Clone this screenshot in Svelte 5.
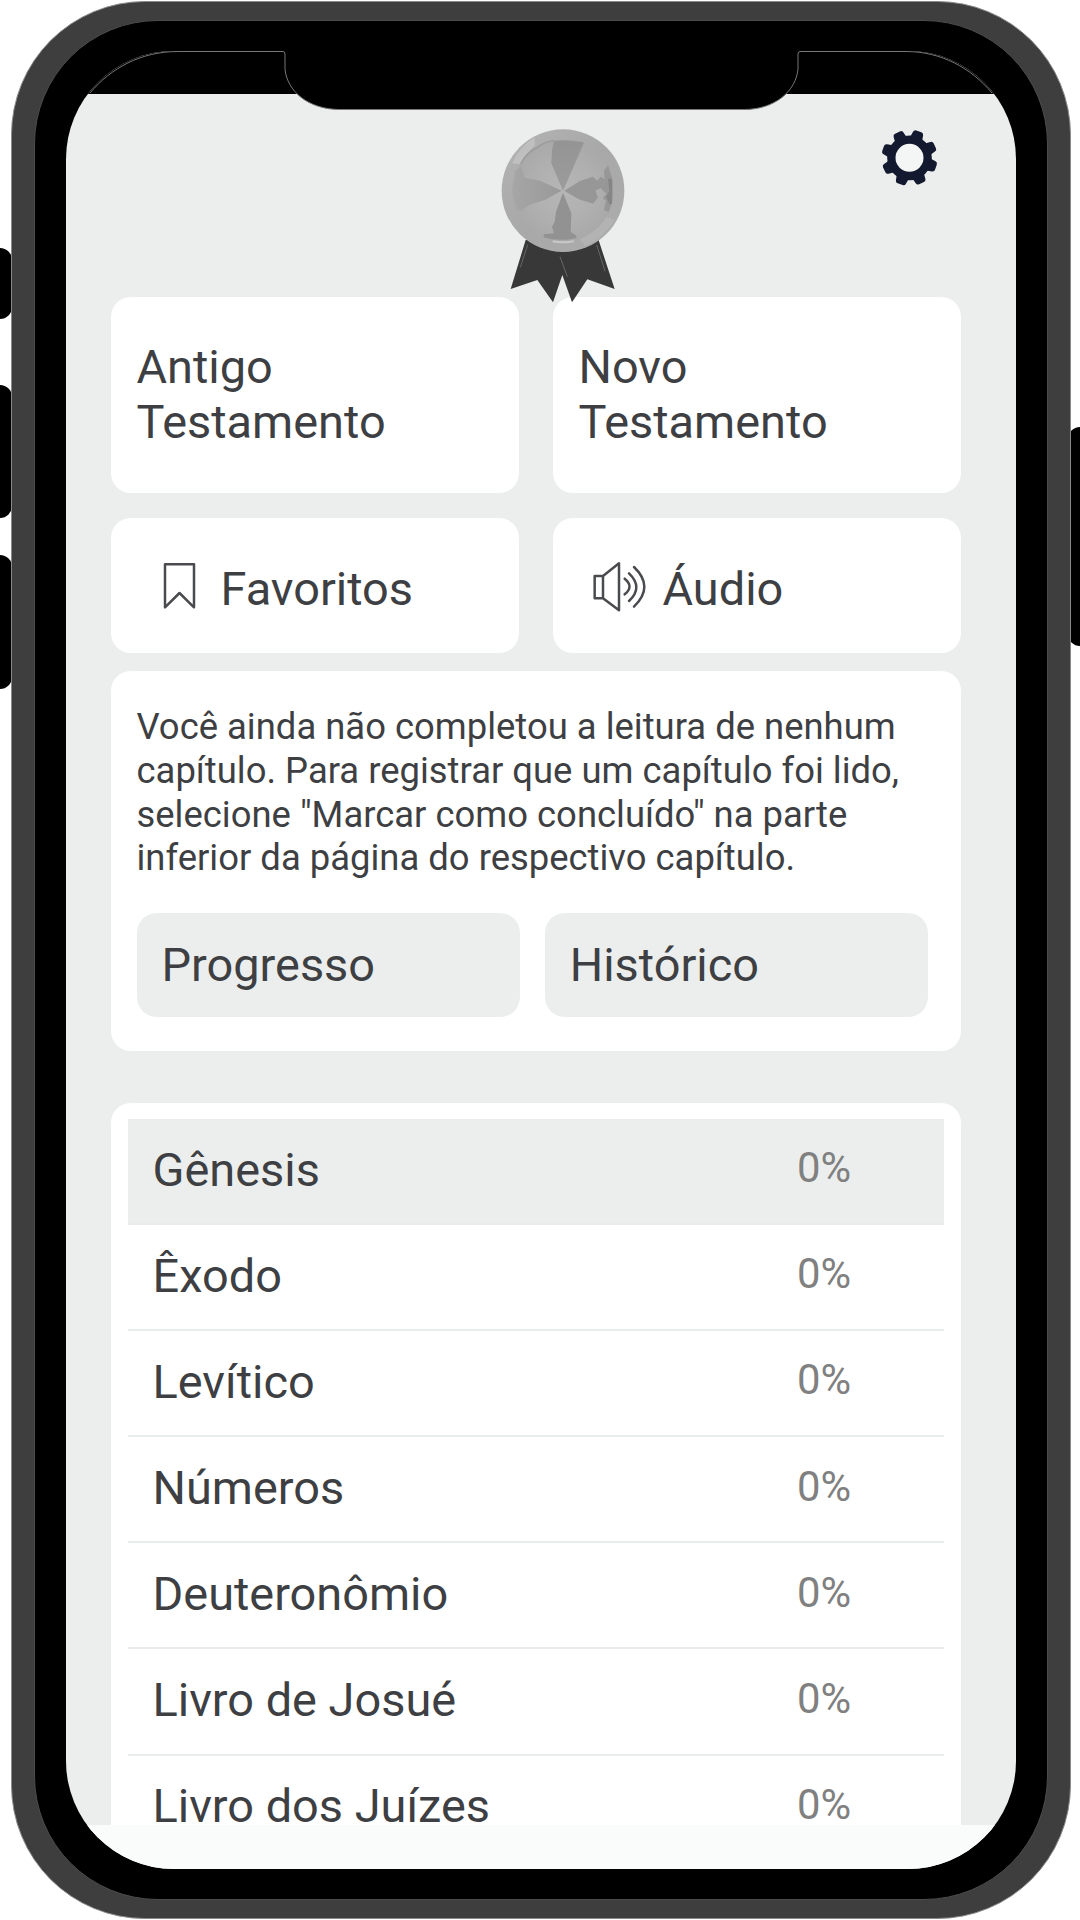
<script lang="ts">
	type Book = { name: string; progress: number };

	const books: Book[] = [
		{ name: 'Gênesis',          progress: 0 },
		{ name: 'Êxodo',            progress: 0 },
		{ name: 'Levítico',         progress: 0 },
		{ name: 'Números',          progress: 0 },
		{ name: 'Deuteronômio',     progress: 0 },
		{ name: 'Livro de Josué',   progress: 0 },
		{ name: 'Livro dos Juízes', progress: 0 },
	];

	const teeth = [0, 1, 2, 3, 4, 5, 6, 7].map((i) => 19.5 + i * 45);

	let selected = $state('Gênesis');
</script>

<div class="device">
	<span class="key key-mute"></span>
	<span class="key key-up"></span>
	<span class="key key-down"></span>
	<span class="key key-power"></span>

	<div class="shell">
		<div class="bezel">
			<div class="screen">
				<div class="status"></div>

				<header class="top">
					<svg class="medal" viewBox="0 0 510 630" aria-hidden="true">
						<defs>
							<linearGradient id="rim" x1="0" y1="0" x2="1" y2="1">
								<stop offset="0" stop-color="#b4b4b4" />
								<stop offset="0.5" stop-color="#a8a8a8" />
								<stop offset="1" stop-color="#adadad" />
							</linearGradient>
							<radialGradient id="face">
								<stop offset="0" stop-color="#b6b6b6" />
								<stop offset="0.6" stop-color="#b0b0b0" />
								<stop offset="1" stop-color="#a9a9a9" />
							</radialGradient>
							<linearGradient id="shade" x1="0" y1="0" x2="0" y2="1">
								<stop offset="0" stop-color="#949494" />
								<stop offset="1" stop-color="#9c9c9c" />
							</linearGradient>
							<linearGradient id="side" x1="0" y1="0" x2="1" y2="0">
								<stop offset="0" stop-color="#a6a6a6" />
								<stop offset="1" stop-color="#999" />
							</linearGradient>
						</defs>
						<!-- Ribbon -->
						<path d="M137 390 L92 537 L172 510 L219 577 L247 495 L276 577 L322 508 L404 537 L355 388 Z" fill="#383838" />
						<path d="M143 404 L121 472 M350 404 L375 484 M240 440 L262 500" fill="none" stroke="#666" stroke-width="3" />
						<!-- Disc -->
						<circle cx="249" cy="242" r="184" fill="url(#rim)" />
						<path d="M96 160 Q118 112 163 82 L165 106 Q136 130 122 163 Z" fill="#bfbfbf" />
						<path d="M372 318 L404 330 Q370 385 315 408 L300 388 Q350 366 372 318 Z" fill="#b3b3b3" />
						<circle cx="249" cy="242" r="152" fill="url(#face)" />
						<path d="M122 163 Q136 130 172 112 Q200 92 222 92" fill="none" stroke="#999" stroke-width="4" />
						<path d="M249 242 L214 160 L216 120 L222 92 Q265 88 312 97 L292 145 Z" fill="url(#shade)" />
						<path d="M245 242 L180 212 L134 203 L124 170 L106 180 L97 242 L108 292 L122 303 L146 286 L196 269 Z" fill="url(#side)" />
						<path d="M253 242 L300 213 L338 200 L352 212 L362 200 L374 208 L372 183 L384 166 L398 210 L398 270 L386 306 L372 300 L378 272 L368 264 L380 252 L362 234 L346 242 L354 262 L340 281 L296 268 Z" fill="#979797" />
						<path d="M384 206 H396 V282 H388 L378 260 L388 244 Z" fill="#858585" />
						<path d="M249 248 L228 305 L224 336 L216 350 L222 370 L192 373 L190 382 Q240 396 290 384 L288 376 L272 366 L274 310 Z" fill="#929292" />
						<path d="M218 394 Q249 400 282 394" fill="none" stroke="#c8c8c8" stroke-width="6" />
					</svg>
					<svg class="gear" viewBox="0 0 300 300" role="img" aria-label="Configurações">
						<g transform="translate(148.5 143.5)">
							<circle r="42" fill="#f4f5f5" />
							<circle r="54.5" fill="none" stroke="#131a30" stroke-width="25" />
							{#each teeth as angle}
								<path
									transform="rotate({angle})"
									d="M-19 -60 L-16 -77 Q-15 -84 -8 -84 H8 Q15 -84 16 -77 L19 -60 Z"
									fill="#131a30"
								/>
							{/each}
						</g>
					</svg>
				</header>

				<main class="content">
					<div class="pair">
						<button class="tile tile-tall">Antigo<br />Testamento</button>
						<button class="tile tile-tall">Novo<br />Testamento</button>
					</div>

					<div class="pair pair-short">
						<button class="tile tile-icon">
							<svg class="icon" viewBox="0 0 156 156" aria-hidden="true">
								<path d="M45 13 H132 V142 L88.5 99 L45 142 Z" />
							</svg>
							Favoritos
						</button>
						<button class="tile tile-icon">
							<svg class="icon" viewBox="0 0 156 156" aria-hidden="true">
								<path d="M8 48 H33 V115 H8 Z M33 48 L81 10 V151 L33 115" />
								<path d="M98 56 Q127 79 98 103 M111 40 Q155 82 111 123 M126 21 Q188 80 126 140" />
							</svg>
							Áudio
						</button>
					</div>

					<section class="card reading">
						<p class="notice">
							Você ainda não completou a leitura de nenhum<br />
							capítulo. Para registrar que um capítulo foi lido,<br />
							selecione "Marcar como concluído" na parte<br />
							inferior da página do respectivo capítulo.
						</p>
						<div class="actions">
							<button class="action">Progresso</button>
							<button class="action">Histórico</button>
						</div>
					</section>

					<section class="card books">
						{#each books as book (book.name)}
							<button
								class="book"
								class:selected={selected === book.name}
								onclick={() => (selected = book.name)}
							>
								<span>{book.name}</span>
								<span class="percent">{book.progress}%</span>
							</button>
						{/each}
					</section>
				</main>

				<div class="bottom-bar"></div>

				<!-- Notch and the thin screen outline around the status bar -->
				<svg class="notch" viewBox="0 0 950 120" aria-hidden="true">
					<path d="M218 0 V18 C221 40 242 58.5 274 58.5 H678 C709 58.5 730 40 733 18 V0 Z" fill="#000" />
					<path
						d="M24 42 C45 17 75 0.5 112 0.5 H217 Q219 0.5 219 3 V18 C221 40 242 58.5 274 58.5 H678 C709 58.5 730 40 732 18 V3 Q732 0.5 734 0.5 H840 C875 0.5 905 17 926 42"
						fill="none" stroke="#777" stroke-width="1"
					/>
				</svg>
			</div>
		</div>
	</div>
</div>

<style>
	:global(body) {
		background: #fff;
	}

	.device {
		position: relative;
		box-sizing: border-box;
		width: 1080px;
		height: 1920px;
		padding: 1px 9px 1px 11px;
		overflow: hidden;
		font-family: Roboto, sans-serif;
		color: #3e3f43;
	}

	/* ── Phone body ────────────────────────────────────── */
	.shell {
		position: relative;
		box-sizing: border-box;
		height: 1918px;
		padding: 18px 22px;
		border: 1px solid #8a8a8a;
		border-radius: 134px;
		background: #3e3e3e;
	}

	.bezel {
		box-sizing: border-box;
		height: 1880px;
		padding: 30px 31px;
		border: 1px solid #4c4c4e;
		border-radius: 124px;
		background: #000;
	}

	.key {
		position: absolute;
		left: -12px;
		width: 24px;
		border-radius: 14px;
		background: #000;
	}

	.key-mute  { top: 248px; height: 71px; }
	.key-up    { top: 385px; height: 133px; }
	.key-down  { top: 555px; height: 134px; }
	.key-power { top: 427px; height: 219px; left: auto; right: -12px; }

	.screen {
		position: relative;
		display: flex;
		flex-direction: column;
		width: 950px;
		height: 1818px;
		border-radius: 108px;
		overflow: hidden;
		background: #ebeeed;
	}

	.status {
		flex: none;
		height: 43px;
		background: #000;
	}

	.notch {
		position: absolute;
		top: 0;
		left: 0;
		width: 950px;
		height: 120px;
	}

	/* ── Header ────────────────────────────────────────── */
	.top {
		position: relative;
		z-index: 1;
		flex: none;
		display: grid;
		grid-template-columns: 170px 100px;
		column-gap: 210px;
		box-sizing: border-box;
		height: 203px;
		padding: 16px 0 0 414px;
		pointer-events: none;
	}

	.medal {
		width: 170px;
		height: 210px;
	}

	.gear {
		width: 100px;
		height: 100px;
	}

	/* ── Content ───────────────────────────────────────── */
	.content {
		flex: 1;
		min-height: 0;
		overflow: hidden;
		padding: 0 55px 0 45px;
	}

	button {
		margin: 0;
		border: 0;
		font: inherit;
		color: inherit;
		text-align: left;
	}

	.pair {
		display: grid;
		grid-template-columns: 1fr 1fr;
		gap: 34px;
		margin-bottom: 25px;
	}

	.pair-short {
		margin-bottom: 18px;
	}

	.tile {
		border-radius: 20px;
		background: #fff;
		font-size: 46.9px;
		line-height: 55px;
	}

	.tile-tall {
		height: 196px;
		padding: 0 25.5px 3px;
	}

	.tile-icon {
		display: flex;
		align-items: center;
		gap: 18.5px;
		height: 135px;
		padding: 6px 39px 0;
	}

	.icon {
		width: 52px;
		height: 52px;
		margin-top: -5px;
		overflow: visible;
		fill: none;
		stroke: #4a4b4f;
		stroke-width: 7.5;
		stroke-linecap: round;
		stroke-linejoin: round;
	}

	.card {
		box-sizing: border-box;
		border-radius: 20px;
		background: #fff;
	}

	.reading {
		height: 380px;
		margin-bottom: 52px;
		padding: 34px 33px 34px 25.5px;
	}

	.notice {
		margin: 0 0 33px;
		font-size: 36.43px;
		line-height: 43.8px;
		white-space: nowrap;
	}

	.actions {
		display: grid;
		grid-template-columns: 1fr 1fr;
		gap: 25px;
	}

	.action {
		height: 104px;
		padding: 0 25px 2px;
		border-radius: 20px;
		background: #ebeeed;
		font-size: 46.9px;
	}

	/* ── Book list ─────────────────────────────────────── */
	.books {
		padding: 16px 17px;
	}

	.book {
		display: flex;
		align-items: center;
		justify-content: space-between;
		box-sizing: border-box;
		width: 100%;
		height: 106.1px;
		padding: 0 93px 2.5px 24.5px;
		border-bottom: 2px solid #e9ecec;
		background: #fff;
		font-size: 46.9px;
		line-height: 34px;
	}

	.book.selected {
		background: #ebeeed;
	}

	.percent {
		padding-bottom: 3px;
		font-size: 41.8px;
		line-height: 32px;
		color: #808080;
	}

	.bottom-bar {
		flex: none;
		height: 44px;
		background: #fafcfb;
	}
</style>
